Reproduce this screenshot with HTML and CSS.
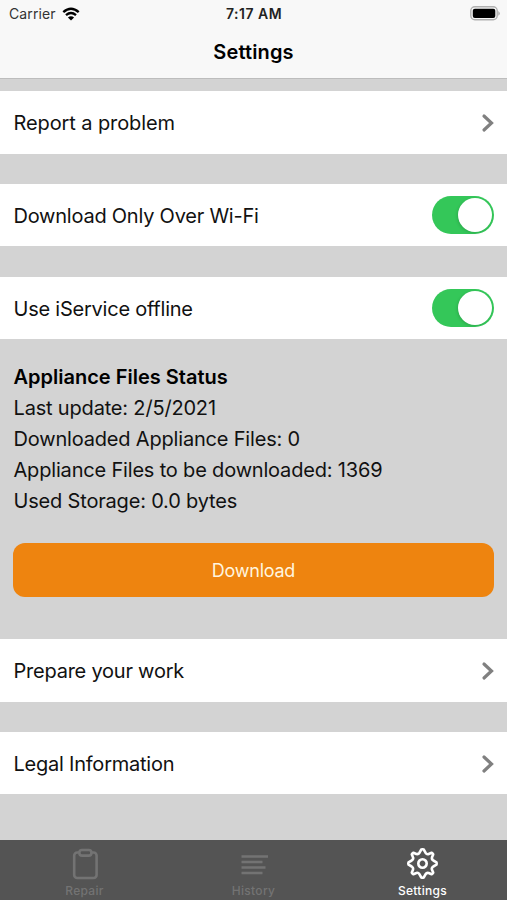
FILE: index.html
```html
<!DOCTYPE html>
<html lang="en">
<head>
<meta charset="utf-8">
<title>Settings</title>
<link rel="stylesheet" href="styles.css">
</head>
<body>
<div class="screen">
  <header class="header">
    <div class="status-bar">
      <div class="carrier"><span>Carrier</span>
        <svg class="wifi" width="18" height="14" viewBox="0 0 18 14"><path d="M1.3 5.1Q9-1.7 16.7 5.1M4 8.1Q9 3.9 14 8.1" fill="none" stroke="#000" stroke-width="2.4"/><path d="M9 13.6 5.9 10.4Q9 8 12.1 10.4Z"/></svg>
      </div>
      <div class="time">7:17 AM</div>
      <svg class="battery" width="31" height="15" viewBox="0 0 31 15"><rect x="1.8" y=".8" width="26.4" height="13" rx="4" fill="#f8f8f8" stroke="#b0b0b0" stroke-width="1.4"/><rect x="3.8" y="2.7" width="22.5" height="9.2" rx="2"/><path d="M29.3 5q3 2.4 0 4.8Z" fill="#aaa"/></svg>
    </div>
    <h1 class="title">Settings</h1>
  </header>
  <main class="content">
    <div class="row"><span class="wide">Report a problem</span><svg class="chevron" width="14" height="20" viewBox="0 0 14 20"><path d="M3 3 10.5 10 3 17"/></svg></div>
    <div class="row"><span>Download Only Over Wi-Fi</span><div class="switch"><div class="knob"></div></div></div>
    <div class="row"><span>Use iService offline</span><div class="switch"><div class="knob"></div></div></div>
    <section class="files">
      <h2>Appliance Files Status</h2>
      <p>Last update: 2/5/2021</p>
      <p>Downloaded Appliance Files: 0</p>
      <p>Appliance Files to be downloaded: 1369</p>
      <p>Used Storage: 0.0 bytes</p>
      <button class="download">Download</button>
    </section>
    <div class="row"><span>Prepare your work</span><svg class="chevron" width="14" height="20" viewBox="0 0 14 20"><path d="M3 3 10.5 10 3 17"/></svg></div>
    <div class="row"><span>Legal Information</span><svg class="chevron" width="14" height="20" viewBox="0 0 14 20"><path d="M3 3 10.5 10 3 17"/></svg></div>
  </main>
  <nav class="tabs">
    <div class="tab"><svg width="34" height="34" viewBox="-17 -17 34 34"><rect x="-10.8" y="-11.5" width="22.4" height="25.5" rx="3"/><rect class="clip" x="-5.6" y="-14" width="12" height="5.6" rx="2.6"/></svg><span>Repair</span></div>
    <div class="tab"><svg width="34" height="34" viewBox="-17 -17 34 34"><path d="M-12.5-7.5H14M-12.5-2H8.5M-12.5 3.5H11.5M-12.5 9H8.5"/></svg><span>History</span></div>
    <div class="tab active"><svg width="34" height="34" viewBox="-16.5 -16.5 34 34"><path d="M14-1.2Q14.4 0 14 1.2L10.8 3Q8.7 4.4 9.5 6.2L10.7 9.1Q10.2 10.2 9.1 10.7L6.2 9.5Q4.1 9 3 10.8L1.2 14Q0 14.4-1.2 14L-3 10.8Q-4.4 8.7-6.2 9.5L-9.1 10.7Q-10.2 10.2-10.7 9.1L-9.5 6.2Q-9 4.1-10.8 3L-14 1.2Q-14.4 0-14-1.2L-10.8-3Q-8.7-4.4-9.5-6.2L-10.7-9.1Q-10.2-10.2-9.1-10.7L-6.2-9.5Q-4.1-9-3-10.8L-1.2-14Q0-14.4 1.2-14L3-10.8Q4.4-8.7 6.2-9.5L9.1-10.7Q10.2-10.2 10.7-9.1L9.5-6.2Q9-4.1 10.8-3Z"/><circle r="4.2"/></svg><span>Settings</span></div>
  </nav>
</div>
</body>
</html>
```
FILE: styles.css
```css
* { box-sizing: border-box; }
body { margin: 0; font-family: Inter, "Liberation Sans", sans-serif; color: #111; }
.screen { width: 507px; height: 900px; display: flex; flex-direction: column; background: #d3d3d3; overflow: hidden; }
.header { height: 79px; background: #f8f8f8; border-bottom: 1px solid #bdbdbd; flex: none; }
.status-bar { height: 27px; display: grid; grid-template-columns: 1fr auto 1fr; align-items: center; padding: 0 7px 0 9px; font-size: 14px; }
.carrier { display: flex; align-items: center; gap: 6px; color: #333; letter-spacing: 0.1px; }
.time { font-weight: 600; font-size: 14px; letter-spacing: 0.5px; margin-right: 1px; color: #222; }
.battery { justify-self: end; }
.title { margin: 0; height: 50px; line-height: 50px; text-align: center; font-size: 20px; font-weight: 600; letter-spacing: 0.15px; color: #000; }
.content { flex: 1; padding-top: 12px; font-size: 20px; letter-spacing: -0.23px; }
.row { height: 62.5px; margin-bottom: 30.3px; padding: 0 13px 0 13.5px; background: #fff; display: flex; align-items: center; justify-content: space-between; }
.row > span { padding-top: 2px; }
.row .wide { letter-spacing: -0.1px; }
.row:has(+ .files) { margin-bottom: 0; }
.chevron { margin: 1px -1px 0 0; fill: none; stroke: #808080; stroke-width: 3.2; stroke-linecap: round; }
.switch { width: 62px; height: 38px; border-radius: 19px; background: #34c759; padding: 2px; display: flex; justify-content: flex-end; }
.knob { width: 34px; height: 34px; border-radius: 50%; background: #fff; box-shadow: -1px 1px 3px #0002; }
.files { height: 300px; padding: 23px 13px 0; }
.files h2, .files p { margin: 0; height: 31px; line-height: 31px; padding-left: 0.5px; font-size: 20px; letter-spacing: -0.18px; white-space: nowrap; }
.files h2 { font-weight: 600; letter-spacing: 0; color: #000; }
.download { display: block; width: 100%; height: 54px; margin-top: 26px; border: 0; border-radius: 12px; background: #ee840f; color: #fff5df; font: 18px Inter, sans-serif; letter-spacing: -0.25px; }
.tabs { height: 60px; flex: none; background: #545454; display: grid; grid-template-columns: repeat(3, 1fr); color: #737373; }
.tab { display: flex; flex-direction: column; align-items: center; padding-top: 7px; font-size: 12px; font-weight: 500; line-height: 15px; letter-spacing: 0.3px; }
.tab svg { display: block; margin-bottom: 2px; fill: none; stroke: currentColor; stroke-width: 2.6; stroke-linejoin: round; }
.tab .clip { fill: #545454; }
.tab.active { color: #fff; }
```
